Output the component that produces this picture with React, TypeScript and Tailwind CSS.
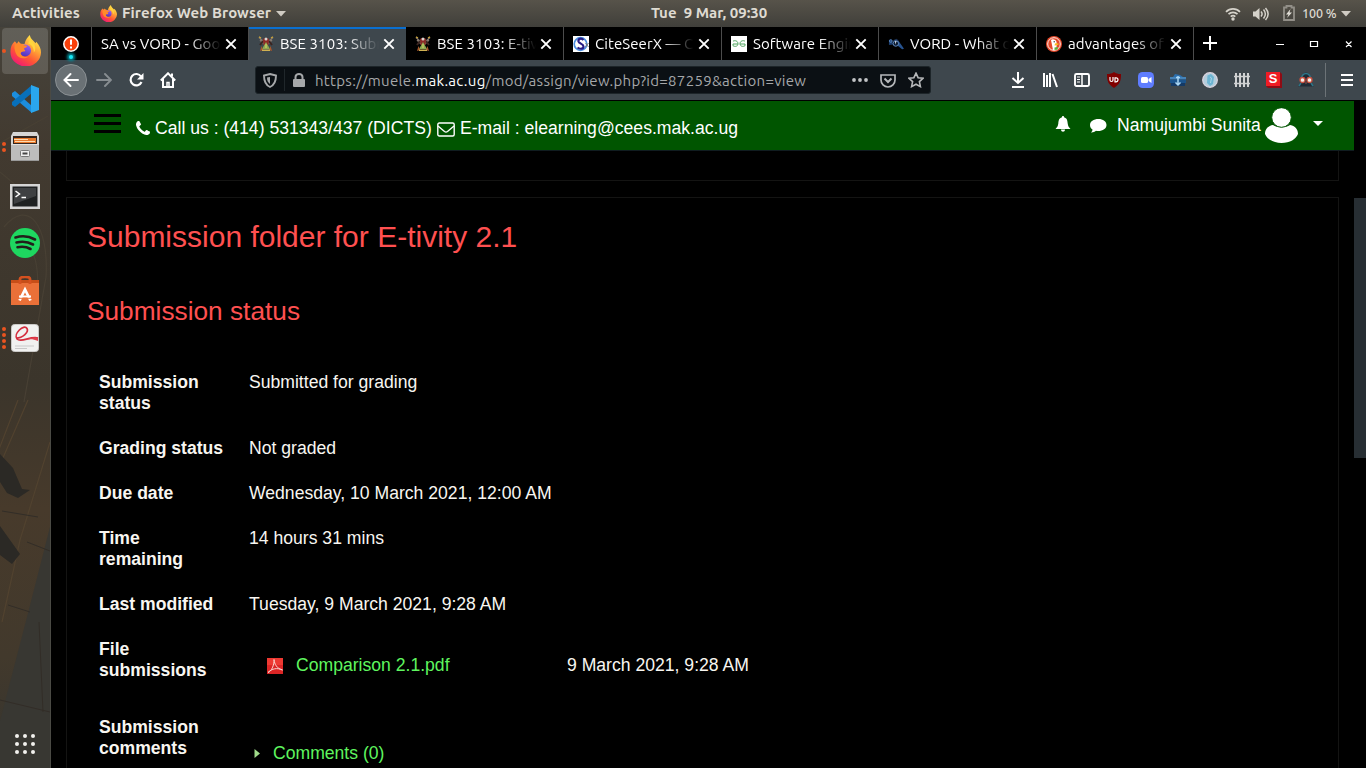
import React from "react";

const UI = "font-['Ubuntu','Noto_Sans',sans-serif]";

function Firefox({ className }: { className: string }) {
  return (
    <svg viewBox="0 0 32 32" className={className}>
      <defs>
        <linearGradient id="ffBody" x1="0.85" y1="0.05" x2="0.25" y2="1">
          <stop offset="0" stopColor="#fff44f" />
          <stop offset="0.35" stopColor="#ffa436" />
          <stop offset="0.65" stopColor="#ff5634" />
          <stop offset="1" stopColor="#f0147a" />
        </linearGradient>
        <linearGradient id="ffGlobe" x1="0.7" y1="0" x2="0.3" y2="1">
          <stop offset="0" stopColor="#9a5cf6" />
          <stop offset="1" stopColor="#4b34b5" />
        </linearGradient>
      </defs>
      <path d="M5 6.5 7.2 9l1.5-2.6L11 9l4 .2C16 5 18 2 20.500 0c.5 4 3.500 5.500 6 8.500l.6-1.500c3.500 4 4.900 7.500 4.900 11A15.500 14.500 0 0 1 .5 17.500C.3 13 2 9 5 6.500Z" fill="url(#ffBody)" />
      <circle cx="15.500" cy="16" r="6.200" fill="url(#ffGlobe)" />
      <path d="M5 10c4-2 7-1 9.500.6 2 .4 3.200.3 3.300 1-.6 1.500-3 1.600-3.300 2.400 0 1.500 2 2 1 2.900-2 .6-4 .1-4.500 2 .5 3 4 4.500 8 3.500-4 3-11 2-13-3.500C5 16 4 13 5 10Z" fill="#ff8a2a" />
      <path d="M19 9c3 .5 6 4 5.500 9 2-2 2-5 1-7.500L21 3c-1 2-2 4-2 6Z" fill="#ffd53d" />
    </svg>
  );
}

function Crest() {
  return (
    <svg viewBox="0 0 16 16" className="h-4 w-4 shrink-0">
      <path d="M1 1.500 6 6M15 1.500 10 6M2 4l4 4M14 4l-4 4" stroke="#85786f" strokeWidth="1.300" />
      <path d="M1 .8 3 2M15 .8 13 2" stroke="#c7a23c" strokeWidth="1.400" />
      <path d="M2 9 5 5M14 9l-3-4" stroke="#3a2420" strokeWidth="2" />
      <path d="M5 3.500C5 1.500 11 1.500 11 3.500L10.500 9h-5Z" fill="#8c2a26" />
      <circle cx="8" cy="3" r="1.500" fill="#d9d4cf" />
      <path d="M8 6 12 13H4Z" fill="#8ea853" />
      <path d="M7 8h2v4H7z" fill="#b5bf5c" />
      <path d="M2 15 3.500 10 5 14h6l1.500-4L14 15l-3-1H5Z" fill="#a9572b" />
      <path d="M4 13.500h8V15H4z" fill="#d0b252" />
    </svg>
  );
}

function CiteSeer() {
  return (
    <svg viewBox="0 0 16 16" className="h-4 w-4 shrink-0">
      <path fill="#fff" d="M0 0h16v16H0z" />
      <circle cx="7.500" cy="8" r="6.300" fill="none" stroke="#4a8ee0" strokeWidth="1.700" />
      <path d="M10.500 4C8 1.500 5 3 5.500 5.500c.5 2 5 2.500 5 5 0 2.500-3.500 3-6 1" fill="none" stroke="#281d86" strokeWidth="2.200" />
      <path d="m12.500 7 3 4m0-4-3 4" stroke="#777" strokeWidth=".9" />
    </svg>
  );
}

function Geeks() {
  return (
    <svg viewBox="0 0 16 16" className="h-4 w-4 shrink-0">
      <path fill="#fff" d="M0 0h16v16H0z" />
      <g fill="none" stroke="#4fa35e" strokeWidth="1">
        <path d="M2 5.200C4 4 7 5 7 7.700s-3 3.300-5 2V8h5" />
        <path d="M14 5.200C12 4 9 5 9 7.700s3 3.300 5 2V8H9" />
      </g>
    </svg>
  );
}

function Binoculars() {
  return (
    <svg viewBox="0 0 17 16" className="h-4 w-4 shrink-0">
      <path d="M1 3.500h3l1.500 5-4.500.5Z" fill="#1c3d6e" />
      <path d="m10 3 2 3 5 7-2 .5-5-4Z" fill="#27538f" />
      <path d="M5.500 4 9 2.500l2 2-4 2Z" fill="#1d3458" />
      <circle cx="3" cy="4.800" r="1.400" fill="none" stroke="#5684bd" />
      <circle cx="8.300" cy="7.500" r="2.900" fill="#0b1a30" stroke="#6d9ad3" strokeWidth=".9" />
      <path d="m7.500 5 1.500-.2-1 4Z" fill="#fff" />
    </svg>
  );
}

function Duck() {
  return (
    <svg viewBox="0 0 16 16" className="h-4 w-4 shrink-0">
      <circle cx="8" cy="8" r="8" fill="#e5492a" />
      <circle cx="8" cy="8" r="6.300" fill="none" stroke="#fff" strokeWidth=".9" />
      <path d="M5 4C6 2.800 10 3 10.500 6l.2 3-.7 5H7Z" fill="#fff" />
      <path d="M9 7.500c2-.5 3 0 4 .2-.5 1.300-2 1.800-4.500 1.700Z" fill="#f8b820" />
      <path d="M8.500 11.500 12 11l-.5 2.500-3 .5Z" fill="#5aae3c" />
      <circle cx="8.200" cy="5.800" r=".7" fill="#333" />
    </svg>
  );
}

function Close() {
  return (
    <svg viewBox="0 0 12 12" className="h-3 w-3 shrink-0">
      <path d="m1.300 1.300 9.400 9.400m0-9.400-9.400 9.400" stroke="#fff" strokeWidth="1.900" />
    </svg>
  );
}

type TabProps = { icon?: React.ReactNode; title: string; active?: boolean; w: string };

function Tab({ icon, title, active, w }: TabProps) {
  return (
    <div
      className={`flex h-full shrink-0 items-center pl-[9px] ${w} ${
        active ? "border-t-2 border-[#0a6fd0] bg-[#3e474d] pb-[1px] pr-[11px]" : "border-r border-[#4c4c4c] bg-black pr-[11px] pt-px"
      }`}
    >
      {icon && <span className="mr-[6px] flex shrink-0">{icon}</span>}
      <span className="mr-1 min-w-0 flex-1 overflow-hidden whitespace-nowrap text-[15px] leading-5 tracking-[0.08px] text-white [mask-image:linear-gradient(to_right,black_calc(100%-32px),transparent)]">
        {title}
      </span>
      <Close />
    </div>
  );
}

function SystemBar() {
  return (
    <div className="flex h-[27px] shrink-0 items-center bg-linear-to-b from-[#57534a] to-[#403f3a] text-[15px] font-bold text-[#dfdbd2]">
      <div className="flex w-[651px] shrink-0 items-center pl-3">
        <span className="w-[88px] tracking-[0.12px]">Activities</span>
        <Firefox className="mb-px h-[17px] w-[17px]" />
        <span className="ml-[5px] whitespace-nowrap tracking-[0.1px]">Firefox Web Browser</span>
        <svg viewBox="0 0 10 6" className="ml-[5px] h-[6px] w-[10px]"><path d="M0 0h10L5 5.500Z" fill="#cfcbc3" /></svg>
      </div>
      <div className="whitespace-pre">Tue  9 Mar, 09:30</div>
      <div className="ml-auto flex items-center pr-[15px]">
        <svg viewBox="0 0 16 14" className="mr-[12px] h-[14px] w-4" fill="none" stroke="#d5d2ca" strokeWidth="1.700">
          <path d="M1 4.800c4-4 10-4 14 0M3.500 7.200c2.500-2.500 6.500-2.500 9 0M5.700 9.600c1.300-1.200 3.300-1.200 4.600 0" />
          <circle cx="8" cy="12" r="1.700" fill="#d5d2ca" stroke="none" />
        </svg>
        <svg viewBox="0 0 16 14" className="mr-[14px] h-[14px] w-4" fill="none" stroke="#d5d2ca" strokeWidth="1.500">
          <path d="M0 4.500h2.500L6.500 1v12l-4-3.500H0Z" fill="#d5d2ca" stroke="none" />
          <path d="M8 4.500c1.300 1.500 1.300 3.500 0 5M10.500 2.500c2.500 3 2.500 6 0 9M12.500 1c3.500 4 3.500 8 0 12" />
        </svg>
        <svg viewBox="0 0 12 16" className="mb-px mr-[7px] h-4 w-3">
          <path d="M1 2.500h2.500V1h5v1.500H11V15H1Z" fill="none" stroke="#928f88" strokeWidth="1.800" />
          <path d="M7.500 4 3 9.500h2.500L4 13l5-5.500H6.500Z" fill="#e0ddd5" />
        </svg>
        <span className="w-[35px] whitespace-nowrap text-[12.500px] font-medium tracking-[-0.1px]">100 %</span>
        <svg viewBox="0 0 10 6" className="ml-[4px] h-[6px] w-[10px]"><path d="M0 0h10L5 5.500Z" fill="#cfcbc3" /></svg>
      </div>
    </div>
  );
}

function Dots({ n }: { n: number }) {
  return (
    <span className="flex w-2 shrink-0 flex-col items-center gap-[2px]">
      {Array.from({ length: n }, (_, i) => (
        <span key={i} className="h-1 w-1 rounded-full bg-[#e95420]" />
      ))}
    </span>
  );
}

function Launcher() {
  return (
    <div className="relative flex w-[51px] shrink-0 flex-col overflow-hidden border-r border-[#4a4a44] bg-[#3c362e]">
      <svg viewBox="0 0 50 741" className="absolute inset-0 h-full w-[50px]">
        <defs>
          <linearGradient id="wall" x1="0" y1="0" x2="0" y2="1">
            <stop offset="0" stopColor="#46433b" />
            <stop offset=".16" stopColor="#423a30" />
            <stop offset=".48" stopColor="#3b352b" />
            <stop offset=".65" stopColor="#473a2b" />
            <stop offset=".85" stopColor="#42392c" />
            <stop offset="1" stopColor="#35342f" />
          </linearGradient>
        </defs>
        <path fill="url(#wall)" d="M0 0h50v741H0z" />
        <path d="M50 500 27 590 0 694v47h50Z" fill="#383732" />
        <path d="m50 415-30 98-18 82M18 373-4 430M28 373-1 440" fill="none" stroke="#51422f" strokeWidth="1.200" />
        <path d="m0 427 13 14 9 21 8 1-12 8-11-5-7-11Zm0 72 20 28-8 10-12-9Z" fill="#2b2925" />
        <path d="M2 484 38 490M27 515l23 9M8 578l22 7M39 595l4 90M0 673l50 12" stroke="#322d27" fill="none" />
        <path d="M4 200c25-30 45 0 42 50l-22 125M12 225c20-20 28 10 25 45M0 116l48-27M0 145l30 25" fill="none" stroke="#484034" strokeWidth="1.200" />
      </svg>
      <div className="relative flex h-[48px] shrink-0 items-center">
        <span className="absolute left-[2px] top-px flex h-[46px] w-[46px] items-center justify-center rounded bg-white/15">
          <Firefox className="mb-[2px] h-[31px] w-[31px]" />
        </span>
        <span className="relative"><Dots n={1} /></span>
      </div>
      <div className="relative flex h-[48px] items-center pl-[11px]">
        <svg viewBox="0 0 28 28" className="h-7 w-7">
          <path d="m1 8 3-2 17 15v7L1 11Z" fill="#1c8ede" />
          <path d="m1 20 3 2L21 8V0L1 17Z" fill="#0870bb" />
          <path d="m20 0 8 3v22l-8 3Z" fill="#2aa6ed" />
        </svg>
      </div>
      <div className="relative flex h-[48px] items-center">
        <Dots n={2} />
        <svg viewBox="0 0 28 29" className="mb-px ml-[3px] h-[29px] w-7">
          <path d="M2 0h24l2 4v24H0V4Z" fill="#d6d6d5" />
          <path d="M2 4h24v8H2Z" fill="#34251e" />
          <path d="M3 6h22v5H3Z" fill="#e77a2c" /><path d="M3 7.500h14M4 9.500h20" stroke="#ffe5bd" strokeWidth=".9" />
          <path d="M0 12h28v17H0z" fill="#bdbdbc" /><path d="M0 12h28v1H0z" fill="#e0e0df" /><path d="M0 28h28v1H0z" fill="#999" />
          <rect x="9.500" y="18.500" width="9" height="6" rx="1" fill="#eee" stroke="#777" /><path d="M11.500 21.500h5" stroke="#444" strokeWidth="2" />
        </svg>
      </div>
      <div className="relative flex h-[49px] items-center pl-[10px]">
        <svg viewBox="0 0 30 25" className="mt-px h-[25px] w-[30px]">
          <path d="M0 0h30v25H0z" fill="#d5d5d5" /><path d="M2.500 2.500h25v20h-25z" fill="#1f2122" /><path d="M4 4h22v8l-22 8z" fill="#3e4042" />
          <path d="m5.500 7 4 3-4 3M11.500 13.500h4.500" fill="none" stroke="#fff" strokeWidth="1.500" />
        </svg>
      </div>
      <div className="relative flex h-[46px] items-center pl-[10px]">
        <svg viewBox="0 0 30 30" className="h-[30px] w-[30px]">
          <circle cx="15" cy="15" r="15" fill="#1ed760" />
          <path d="M5.500 9.500c6.500-2 13.500-1.300 19.500 2M6.500 14.500c6-1.500 11.500-.8 16.500 2M7.500 19.300c5-1.200 9-.6 13 1.700" fill="none" stroke="#221f1b" strokeWidth="2.600" strokeLinecap="round" />
        </svg>
      </div>
      <div className="relative flex h-[49px] items-center pl-[11px]">
        <svg viewBox="0 0 28 29" className="h-[29px] w-7">
          <path d="M0 4h28v5H0z" fill="#c74e18" /><path d="M0 7h28v22H0z" fill="#ea7038" />
          <path d="M9 8V3c0-3 10-3 10 0v5" fill="none" stroke="#d4501f" strokeWidth="2.800" />
          <path d="m8.500 24.500 5.500-11 5.500 11" fill="none" stroke="#fff" strokeWidth="2.700" /><path d="M8 20.500h12" stroke="#fff" strokeWidth="2" /><path d="M7 22.300h14" stroke="#ea7038" />
        </svg>
      </div>
      <div className="relative flex h-[46px] items-center">
        <Dots n={4} />
        <svg viewBox="0 0 28 28" className="ml-[3px] h-7 w-7">
          <rect x=".5" y=".5" width="27" height="27" rx="3" fill="#f1f1f0" stroke="#cac9c7" />
          <path d="M5 14C12 14 18 8 16 4.500 13-.5 2 10 6 15c4 4 13-3 21-1" fill="none" stroke="#d42d3d" strokeWidth="1.700" />
          <path d="M14 16c5-2 8-3 13-2v3c-5-2-8-2-13-1Z" fill="#e1414e" /><path d="M4 22h19M4 24.500h12" stroke="#c9c9c9" />
        </svg>
      </div>
      <div className="relative mt-auto grid grid-cols-3 gap-1 self-start pb-[14px] pl-[15px]">
        {Array.from({ length: 9 }, (_, i) => <span key={i} className="h-1 w-1 rounded-full bg-[#f2f1ee]" />)}
      </div>
    </div>
  );
}

function TabStrip() {
  return (
    <div className="flex h-[33px] shrink-0 bg-black">
      <div className="relative flex w-[41px] shrink-0 items-center justify-center border-r border-[#4c4c4c]">
        <svg viewBox="0 0 16 16" className="mt-px h-4 w-4">
          <circle cx="8" cy="8" r="7.200" fill="#f9400b" stroke="#fff" strokeWidth="1.500" /><path d="M8 3.500v5.300M8 10.500v2" stroke="#fff" strokeWidth="2" />
        </svg>
        <span className="absolute bottom-px left-[17.500px] h-1 w-1 rounded-full bg-[#19e8f5] shadow-[0_0_3px_2px_#008d99]" />
      </div>
      <Tab title="SA vs VORD - Google" w="w-[157px]" />
      <Tab icon={<Crest />} title="BSE 3103: Submission" active w="w-[157px]" />
      <Tab icon={<Crest />} title="BSE 3103: E-tivity 2.1" w="w-[158px]" />
      <Tab icon={<CiteSeer />} title="CiteSeerX — Citation" w="w-[158px]" />
      <Tab icon={<Geeks />} title="Software Engineering" w="w-[157px]" />
      <Tab icon={<Binoculars />} title="VORD - What does" w="w-[158px]" />
      <Tab icon={<Duck />} title="advantages of vord" w="w-[157px]" />
      <div className="flex flex-1 items-center pl-[9px]">
        <svg viewBox="0 0 14 14" className="mb-px h-[14px] w-[14px]"><path d="M7 0v14M0 7h14" stroke="#fff" strokeWidth="2" /></svg>
        <svg viewBox="0 0 76 10" className="ml-auto mr-[14px] h-[10px] w-[76px]" fill="none" stroke="#fff" strokeWidth="1.200">
          <path d="M0 5.500h8M70 2.500l5.500 5.500m0-5.500L70 8" /><path d="M34.500 2.500h7v5h-7z" />
        </svg>
      </div>
    </div>
  );
}

function Toolbar() {
  return (
    <div className="flex h-[41px] shrink-0 items-center border-b border-black bg-[#3e474d] pl-1">
      <div className="flex h-8 w-8 items-center justify-center rounded-full border border-[#8a9093] bg-[#6a7175]">
        <svg viewBox="0 0 16 16" className="h-4 w-4" fill="none" stroke="#fff" strokeWidth="2" strokeLinecap="round"><path d="M15 8H1.500M7.500 2l-6 6 6 6" /></svg>
      </div>
      <svg viewBox="0 0 16 16" className="ml-[9px] h-4 w-4" fill="none" stroke="#878d91" strokeWidth="1.900" strokeLinecap="round"><path d="M1 8h13.500M9 2l6 6-6 6" /></svg>
      <svg viewBox="0 0 16 16" className="ml-4 h-4 w-4"><path d="M13 4.500A5.700 5.700 0 1 0 13.500 10" fill="none" stroke="#fff" strokeWidth="2.200" /><path d="M15.500 1v6.500H9Z" fill="#fff" /></svg>
      <svg viewBox="0 0 16 16" className="ml-4 h-4 w-4" fill="none" stroke="#fff" strokeWidth="2"><path d="M.8 8.500 8 1.300l7.200 7.200M3 7v8h10V7" /><path d="M12 1.500v3" /><path d="M7 15v-4.500h2V15" strokeWidth="1.500" /></svg>

      <div className="ml-[79px] flex h-7 w-[676px] items-center rounded-[3px] border border-[#1d2529] bg-[#0b1014] text-[#a6a8aa]">
        <svg viewBox="0 0 14 15" className="ml-[7px] h-[15px] w-[14px]"><path d="M7 1 13 2.500C13 8 11.500 12 7 14 2.500 12 1 8 1 2.500Z" fill="none" stroke="#a6a8aa" strokeWidth="1.900" /><path d="M7 4 4 4.500c0 3.500 1 5 3 6.500Z" fill="#a6a8aa" /></svg>
        <span className="ml-[7px] h-[22px] w-px bg-[#20272b]" />
        <svg viewBox="0 0 12 14" className="ml-2 h-[14px] w-3"><rect y="6" width="12" height="8" rx="1" fill="#a6a8aa" /><path d="M2.500 7V4a3.500 3 0 0 1 7 0v3" fill="none" stroke="#a6a8aa" strokeWidth="2" /></svg>
        <span className="ml-[10px] mt-[2px] w-[493px] whitespace-nowrap text-[15px] tracking-[0.3px]">
          https://muele.<span className="text-white">mak.ac.ug</span>/mod/assign/view.php?id=87259&amp;action=view
        </span>
        <svg viewBox="0 0 18 6" className="ml-[43px] h-[6px] w-[18px]" fill="#c1c3c5"><circle cx="3" cy="3" r="1.900" /><circle cx="9" cy="3" r="1.900" /><circle cx="15" cy="3" r="1.900" /></svg>
        <svg viewBox="0 0 16 15" className="ml-[11px] h-[15px] w-4" fill="none" stroke="#b6b8ba" strokeWidth="1.700"><path d="M1 2h14v5a7 7 0 0 1-14 0Z" /><path d="m4.500 5.500 3.500 3.500 3.500-3.500" strokeWidth="2" /></svg>
        <svg viewBox="0 0 16 16" className="ml-3 h-4 w-4" fill="none" stroke="#b6b8ba" strokeWidth="1.600"><path d="m8 1.200 2.100 4.500 4.900.6-3.600 3.300 1 5L8 12.200l-4.400 2.400 1-5L1 6.300l4.900-.6Z" /></svg>
      </div>

      <div className="ml-[79px] flex items-center gap-4">
        <svg viewBox="0 0 16 16" className="h-4 w-4" fill="none" stroke="#fff" strokeWidth="2"><path d="M8 0v11M2.500 6 8 11l5.500-5M2 15h12" /></svg>
        <svg viewBox="0 0 16 16" className="h-4 w-4" stroke="#fff" strokeWidth="2"><path d="M2 1v14M5 3v12M8 1v14M10.500 2 15 15" /></svg>
        <svg viewBox="0 0 16 16" className="h-4 w-4" fill="none" stroke="#fff" strokeWidth="1.900"><rect x="1" y="2" width="14" height="12" rx="1.500" /><path d="M8 2v12" strokeWidth="1.500" /><path d="M3 5h3M3 7.500h3M3 10h3" strokeWidth="1" /></svg>
        <span className="relative flex h-4 w-4 items-center justify-center">
          <svg viewBox="0 0 16 16" className="absolute h-4 w-4"><path d="M8 0c2 1.500 4 2 7 2 0 7-1 10-7 14C2 12 1 9 1 2c3 0 5-.5 7-2Z" fill="#800000" /></svg>
          <svg viewBox="0 0 10 6" className="relative h-[6px] w-[10px]" fill="none" stroke="#fff" strokeWidth="1.200"><path d="M1 0v3a1.500 1.500 0 0 0 3 0V0" /><path d="M6 .8h1a2 2 0 0 1 0 4H6Z" /></svg>
        </span>
        <svg viewBox="0 0 16 16" className="h-4 w-4"><rect width="16" height="16" rx="4.500" fill="#5f7dff" /><rect x="3" y="5" width="7" height="6" rx="1.500" fill="#fff" /><path d="m10.500 7 3-2v6l-3-2Z" fill="#fff" /></svg>
        <svg viewBox="0 0 16 16" className="h-4 w-4"><path d="M3 5 5 2l5 1 3 2Z" fill="#2b6fae" /><path d="M0 5h16v2.500H0z" fill="#4583b8" /><path d="M0 7.500h16V11H0z" fill="#1c558d" /><path d="M1 11h14v3H1z" fill="#143a66" /><path d="M8 4v9M5.500 10.500 8 13l2.500-2.500M6 5.500h4" fill="none" stroke="#a9d6f4" strokeWidth="1.500" /></svg>
        <svg viewBox="0 0 16 16" className="h-4 w-4"><circle cx="8" cy="8" r="7.300" fill="#b4cddc" stroke="#dad3de" strokeWidth="1.300" /><path d="M5.500 3.500 9 2l3 3-1 7-3 2-3-3Z" fill="#6cb4d2" /><path d="m8 5 1.500 1-1 5" stroke="#a8d5e8" fill="none" /></svg>
        <svg viewBox="0 0 16 16" className="h-4 w-4" stroke="#cfd1d2"><path d="M2 1v14M6 1v14M10 1v14M14 1v14" strokeWidth="2" /><path d="M0 4.500h16M0 11.500h16" strokeWidth="1.300" /></svg>
        <span className="relative flex h-4 w-4">
          <svg viewBox="0 0 16 16" className="absolute h-4 w-4"><path d="M14 0l2 2v14H2l-2-2Z" fill="#8f0b14" /><path d="M0 0h14v14H0z" fill="#f01c24" /></svg>
          <span className="relative w-[14px] text-center font-['Liberation_Sans',sans-serif] text-[13px] font-bold leading-[14px] text-white">S</span>
        </span>
        <svg viewBox="0 0 16 16" className="h-4 w-4"><path d="M8 .5c5 0 4 8.500 7.500 14H.5C4 9 3 .5 8 .5Z" fill="#1e2b36" /><path d="M3 7C4 3 6 1.500 8 1.500S12 3 13 7M3 11l-2 3M13 11l2 3" fill="none" stroke="#2d7688" strokeWidth="1.500" /><g fill="#f4f1ea" stroke="#c8503f" strokeWidth="1.300"><circle cx="4.500" cy="8" r="2.500" /><circle cx="11.500" cy="8" r="2.500" /></g><path d="m8 9.500-.7 2h1.400Z" fill="#df6556" /></svg>
      </div>
      <span className="ml-[11px] h-[34px] w-px bg-[#6c7377]" />
      <svg viewBox="0 0 12 12" className="ml-[15px] h-3 w-3" stroke="#fff" strokeWidth="2"><path d="M0 1h12M0 6h12M0 11h12" /></svg>
    </div>
  );
}

function SiteHeader() {
  return (
    <header className="flex h-[50px] w-full shrink-0 items-center border-b border-[#101c20] bg-[#005500] text-[17.600px] leading-[21px] text-white">
      <div className="mb-[4px] ml-[43px] flex w-[27px] flex-col gap-[5px]">
        <span className="h-[3px] bg-black" /><span className="h-[3px] bg-black" /><span className="h-[3px] bg-black" />
      </div>
      <svg viewBox="0 0 1408 1408" className="ml-[15px] mt-[4px] h-[14px] w-[14px]" fill="#fff"><path d="M1408 1112q0 27-10 70.500T1377 1251q-21 50-122 106-94 51-186 51-27 0-53-3.500t-57.500-12.500-47-14.500T856 1357t-49-18q-98-35-175-83-127-79-264-216T152 776q-48-77-83-175-3-9-18-49t-20.500-55.500T16 449.500 3.500 392 0 339q0-92 51-186Q107 52 157 31q25-11 68.500-21T296 0q14 0 21 3 18 6 53 76 11 19 30 54t35 63.500 31 53.500q3 4 17.500 25t21.500 35.500 7 28.500q0 20-28.500 50t-62 55-62 53-28.500 46q0 9 5 22.500t8.500 20.500 14 24 11.500 19q76 137 174 235t235 174q2 1 19 11.500t24 14 20.500 8.500 22.500 5q18 0 46-28.500t53-62 55-62 50-28.500q14 0 28.500 7t35.500 21.500 25 17.500q25 15 53.500 31t63.500 35 54 30q70 35 76 53 3 7 3 21Z" /></svg>
      <span className="ml-[5px] mt-[6px] w-[277px] whitespace-nowrap">Call us : (414) 531343/437 (DICTS)</span>
      <svg viewBox="0 0 18 15" className="ml-[5px] mt-[7px] h-[15px] w-[18px]" fill="none" stroke="#fff" strokeWidth="1.400"><rect x=".8" y="1" width="16.400" height="13" rx="1.500" /><path d="m1 4 6.500 5.500c1 .8 2 .8 3 0L17 4" /></svg>
      <span className="ml-[5px] mt-[6px] whitespace-nowrap">E-mail : elearning@cees.mak.ac.ug</span>
      <div className="ml-auto flex items-center">
        <svg viewBox="0 0 16 16" className="mb-[3px] h-4 w-4" fill="#fff"><path d="M8 0c.8 0 1 .5 1 1.200C12 2 12.500 4.500 12.700 7.500 13 10 14 11.500 15.500 13H.5C2 11.500 3 10 3.300 7.500 3.500 4.500 4 2 7 1.200 7 .5 7.200 0 8 0ZM6 13.500h4c0 3-4 3-4 0Z" /></svg>
        <svg viewBox="0 0 18 15" className="ml-[18px] h-[15px] w-[18px]" fill="#fff"><path d="M9.500 1C14 1 17.500 3.500 17.500 7s-3.500 6-8.500 6c-.8 0-1.500 0-2-.2C5.500 14 4 14.700 2 14.500c1-1 1.500-1.800 1.500-3C2 10.500 1 9 1 7c0-3.500 3.500-6 8.500-6Z" /></svg>
        <span className="ml-[10px] w-[145px] whitespace-nowrap">Namujumbi Sunita</span>
        <svg viewBox="0 0 33 35" className="mb-[1px] ml-[3px] h-[35px] w-[33px]" fill="#fff"><path d="M8 17C2 18 0 22 0 26c2 5 8 9 16.500 9S31 31 33 26c0-4-2-8-8-9-4 3-13 3-17 0Z" /><circle cx="16.500" cy="9.500" r="9.800" stroke="#050" strokeWidth="1" /></svg>
        <svg viewBox="0 0 10 5" className="ml-[15px] mr-[31px] mt-[-5px] h-[5px] w-[10px]"><path d="M0 0h10L5 5Z" fill="#fff" /></svg>
      </div>
    </header>
  );
}

function Row({ label, children, h }: { label: string; children: React.ReactNode; h: string }) {
  return (
    <div className={`flex items-start pt-3 ${h}`}>
      <div className="ml-3 w-[150px] shrink-0 pr-[22px] font-bold">{label}</div>
      <div className="whitespace-nowrap">{children}</div>
    </div>
  );
}

export default function App() {
  return (
    <div className={`flex h-[768px] w-[1366px] flex-col overflow-hidden bg-black ${UI}`}>
      <SystemBar />
      <div className="flex min-h-0 flex-1">
        <Launcher />
        <div className="flex min-w-0 flex-1 flex-col">
          <TabStrip />
          <Toolbar />
          <div className="flex min-h-0 flex-1 overflow-hidden font-['Liberation_Sans',Arial,sans-serif]">
            <div className="flex min-w-0 flex-1 flex-col text-[17.600px] leading-[21px] text-[#f8f6f1]">
              <SiteHeader />
              <main className="flex flex-1 flex-col pl-[15px] pr-[15px]">
                <div className="h-[30px] shrink-0 border border-t-0 border-[#141413]" />
                <section className="mt-4 h-[620px] shrink-0 border border-[#141413] px-5 text-[#f8f6f1]">
                  <h2 className="mt-[21px] text-[30px] leading-9 text-[#ff5050]">Submission folder for E-tivity 2.1</h2>
                  <h3 className="mt-[40px] text-[26.250px] leading-8 text-[#ff5050]">Submission status</h3>
                  <div className="mt-[33px]">
                    <Row label="Submission status" h="h-[66px]">Submitted for grading</Row>
                    <Row label="Grading status" h="h-[45px]">Not graded</Row>
                    <Row label="Due date" h="h-[45px]">Wednesday, 10 March 2021, 12:00 AM</Row>
                    <Row label="Time remaining" h="h-[66px]">14 hours 31 mins</Row>
                    <Row label="Last modified" h="h-[45px]">Tuesday, 9 March 2021, 9:28 AM</Row>
                    <Row label="File submissions" h="h-[78px]">
                      <div className="flex items-center pl-[18px] pt-4">
                        <svg viewBox="0 0 16 16" className="h-4 w-4"><path d="M0 0h16v16H0z" fill="#dc2525" /><path d="M0 0h16v7H0z" fill="#ee3932" /><path d="M1 14.500C4 14 7.500 7 7 1.500c.5 5 3 9 8.500 10.500C10 9.500 5 10.500 1 14.500Z" fill="none" stroke="#fbd2cc" /></svg>
                        <span className="ml-[13px] w-[271px] text-[#5ff55f]">Comparison 2.1.pdf</span>
                        <span>9 March 2021, 9:28 AM</span>
                      </div>
                    </Row>
                    <Row label="Submission comments" h="h-[66px]">
                      <div className="flex items-center pl-[5px] pt-[26px]">
                        <svg viewBox="0 0 6 9" className="h-[9px] w-[6px]"><path d="M.5 0v9L6 4.500Z" fill="#a1dc8b" /></svg>
                        <span className="ml-[13px] text-[#5ff55f]">Comments (0)</span>
                      </div>
                    </Row>
                  </div>
                </section>
              </main>
            </div>
            <div className="w-3 shrink-0 bg-black pt-[97px]"><div className="h-[260px] bg-[#272e33]" /></div>
          </div>
        </div>
      </div>
    </div>
  );
}
